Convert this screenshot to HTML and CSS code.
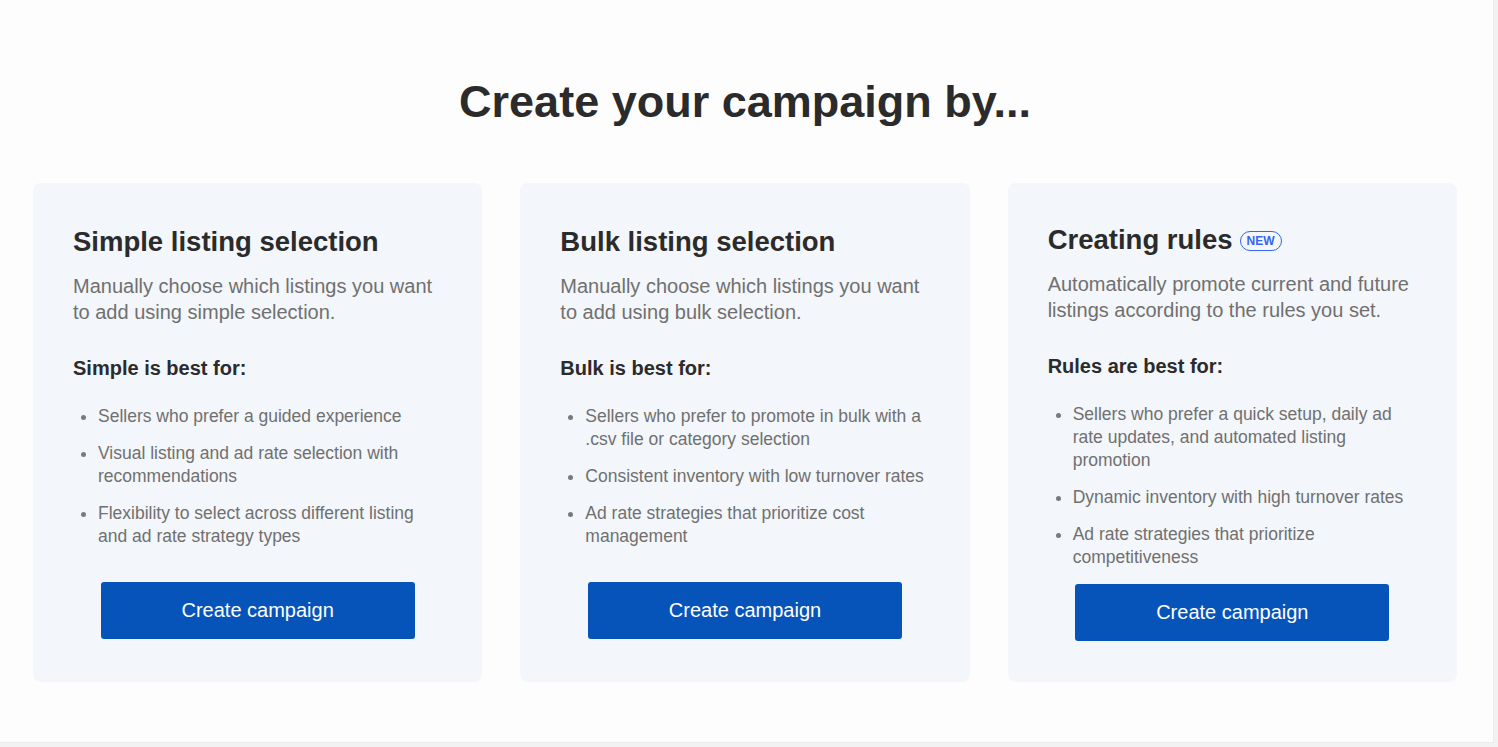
FILE: index.html
```html
<!DOCTYPE html>
<html lang="en">
<head>
<meta charset="utf-8">
<title>Create your campaign</title>
<link rel="stylesheet" href="styles.css">
</head>
<body>
<main class="panel">
  <h1 class="title">Create your campaign by...</h1>
  <section class="cards">
    <article class="card">
      <h2 class="card-title">Simple listing selection</h2>
      <p class="card-desc">Manually choose which listings you want to add using simple selection.</p>
      <h3 class="best-for">Simple is best for:</h3>
      <ul class="points">
        <li>Sellers who prefer a guided experience</li>
        <li>Visual listing and ad rate selection with recommendations</li>
        <li>Flexibility to select across different listing and ad rate strategy types</li>
      </ul>
      <button class="btn" type="button">Create campaign</button>
    </article>
    <article class="card">
      <h2 class="card-title">Bulk listing selection</h2>
      <p class="card-desc">Manually choose which listings you want to add using bulk selection.</p>
      <h3 class="best-for">Bulk is best for:</h3>
      <ul class="points">
        <li>Sellers who prefer to promote in bulk with a .csv file or category selection</li>
        <li>Consistent inventory with low turnover rates</li>
        <li>Ad rate strategies that prioritize cost management</li>
      </ul>
      <button class="btn" type="button">Create campaign</button>
    </article>
    <article class="card card--tall">
      <h2 class="card-title">Creating rules <span class="badge">NEW</span></h2>
      <p class="card-desc">Automatically promote current and future listings according to the rules you set.</p>
      <h3 class="best-for">Rules are best for:</h3>
      <ul class="points">
        <li>Sellers who prefer a quick setup, daily ad rate updates, and automated listing promotion</li>
        <li>Dynamic inventory with high turnover rates</li>
        <li>Ad rate strategies that prioritize competitiveness</li>
      </ul>
      <button class="btn" type="button">Create campaign</button>
    </article>
  </section>
</main>
</body>
</html>
```
FILE: styles.css
```css
* { box-sizing: border-box; }
html, body { margin: 0; padding: 0; }
body {
  background: #f2f2f2;
  font-family: "Liberation Sans", Arial, sans-serif;
  color: #2b2b2b;
  width: 1498px;
  height: 747px;
  overflow: hidden;
}
.panel {
  width: 1494px;
  height: 743px;
  background: #fdfdfe;
  border-right: 1px solid #ececec;
  border-bottom: 1px solid #ececec;
  padding: 74px 36px 0 33px;
}
.title {
  margin: 0 0 54px;
  font-size: 45px;
  line-height: 55px;
  font-weight: 700;
  text-align: center;
  color: #2b2b2b;
}
.cards {
  display: grid;
  grid-template-columns: repeat(3, 1fr);
  column-gap: 38px;
}
.card {
  background: #f3f6fa;
  border-radius: 8px;
  height: 499px;
  padding: 43px 40px 43px;
  display: flex;
  flex-direction: column;
}
.card--tall {
  padding-top: 41px;
  padding-bottom: 41px;
}
.card-title {
  margin: 0;
  font-size: 27.5px;
  line-height: 31px;
  font-weight: 700;
  color: #2b2b2b;
  display: flex;
  align-items: center;
  gap: 7px;
}
.badge {
  display: inline-block;
  font-size: 12px;
  line-height: 16px;
  font-weight: 700;
  color: #3665f3;
  border: 1px solid #3665f3;
  border-radius: 10px;
  padding: 1px 6px;
  margin-top: 3px;
}
.card-desc {
  margin: 16px 0 0;
  font-size: 20px;
  line-height: 26px;
  color: #707070;
}
.best-for {
  margin: 31px 0 0;
  font-size: 20px;
  line-height: 24px;
  font-weight: 700;
  color: #2b2b2b;
}
.points {
  margin: 25px 0 0;
  padding: 0 0 0 25px;
  list-style: disc;
  color: #707070;
  font-size: 17.5px;
  line-height: 23px;
}
.points li + li { margin-top: 14px; }
.points li::marker { color: #7a7a7a; }
.btn {
  margin: auto auto 0;
  flex: none;
  width: 314px;
  height: 57px;
  background: #0654ba;
  color: #ffffff;
  border: 0;
  border-radius: 3px;
  font-family: "Liberation Sans", Arial, sans-serif;
  font-size: 20px;
  cursor: pointer;
}
```
